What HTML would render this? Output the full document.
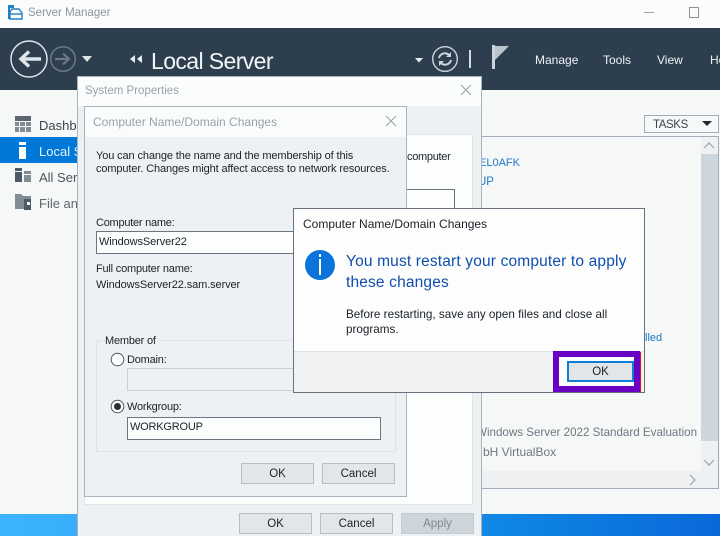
<!DOCTYPE html>
<html><head><meta charset="utf-8"><style>
html,body{margin:0;padding:0;width:720px;height:536px;overflow:hidden;background:#f6f7f7}
*{box-sizing:border-box}
.a{position:absolute}
.t{position:absolute;white-space:nowrap;font-family:"Liberation Sans",sans-serif;font-size:12px;line-height:15px;color:#1a2128}
.b{position:absolute;background:#e2e6e9;border:1px solid #b4bfc9;text-align:center;font-family:"Liberation Sans",sans-serif;font-size:11.5px;color:#1a2128}
.s{font-size:11px;letter-spacing:-.2px}
</style></head><body>
<div id="r" class="a" style="left:0;top:0;width:720px;height:536px;overflow:hidden">
<div class="a" style="left:0;top:0;width:720px;height:28px;background:#fcfcfc"></div>
<svg class="a" style="top:4px;left:7px" width="16" height="16" viewBox="0 0 16 16"><path d="M1 1h6v3H1zM1 4h2v11H1z" fill="#1f80c8"/><path d="M3 8l2-3h7l3 4v6H3z" fill="#fff" stroke="#1f80c8" stroke-width="1.4"/><path d="M3 10h12" stroke="#1f80c8" stroke-width="1.4"/></svg>
<div class="t" style="left:28px;top:6px;font-size:11.5px;color:#8b959e">Server Manager</div>
<div class="a" style="left:644px;top:12px;width:10px;height:1px;background:#9aa4ad"></div>
<div class="a" style="left:689px;top:7px;width:10px;height:11px;border:1px solid #8b959e"></div>

<div class="a" style="left:0;top:28px;width:720px;height:62px;background:#2d3f4e"></div>
<svg class="a" style="left:0;top:28px" width="720" height="62" viewBox="0 28 720 62">
<circle cx="29" cy="59" r="18" fill="none" stroke="#dfe5e8" stroke-width="1.5"/>
<path d="M41 59H22M29 51.500l-8 7.500 8 7.500" fill="none" stroke="#dfe5e8" stroke-width="3.400"/>
<circle cx="63" cy="59" r="12.300" fill="none" stroke="#6c7983" stroke-width="1.500"/>
<path d="M55 59h14M63 53.500l6 5.500-6 5.500" fill="none" stroke="#6c7983" stroke-width="2.200"/>
<path d="M82 56h10l-5 6z" fill="#dde3e7"/>
<path d="M130 59l5-4v8zM137 59l5-4v8z" fill="#e8edf0"/>
<path d="M415 58h8l-4 4.500z" fill="#e8edf0"/>
<circle cx="445" cy="59" r="12.300" fill="none" stroke="#ccd5da" stroke-width="1.400"/>
<path d="M439 58a6 6 0 0 1 10-3M451 60a6 6 0 0 1-10 3" fill="none" stroke="#ccd5da" stroke-width="2"/>
<path d="M451 52v5h-5zM439 66v-5h5z" fill="#ccd5da"/>
<rect x="469" y="50" width="2" height="18" fill="#d5dde1"/>
<rect x="492" y="45" width="3" height="24" fill="#c9d4da"/>
<path d="M495 46h14l-14 14z" fill="#b9c5cc"/>
</svg>
<div class="t" style="left:151px;top:46px;font-size:23px;line-height:30px;color:#f2f5f6;letter-spacing:-.6px">Local Server</div>
<div class="t" style="left:535px;top:53px;color:#eef2f4;font-size:12px">Manage</div>
<div class="t" style="left:603px;top:53px;color:#eef2f4;font-size:12px">Tools</div>
<div class="t" style="left:657px;top:53px;color:#eef2f4;font-size:12px">View</div>
<div class="t" style="left:710px;top:53px;color:#eef2f4;font-size:12px">Help</div>

<div class="a" style="left:0;top:90px;width:720px;height:424px;background:#f6f7f7"></div>
<div class="a" style="left:0;top:137px;width:77px;height:26px;background:#0078d7"></div>
<svg class="a" style="left:0;top:105px" width="77" height="110" viewBox="0 105 77 110">
<path d="M15 116h16v5H15z" fill="#5d6670"/><path d="M15 122h4v4h-4zM20 122h5v4h-5zM26 122h5v4h-5zM15 127h4v5h-4zM20 127h5v5h-5zM26 127h5v5h-5z" fill="#838b94"/>
<rect x="19" y="142" width="7" height="3" fill="#fff"/><rect x="19" y="147" width="7" height="12" fill="#fff"/>
<path d="M15 168h7v3h-7zM15 172h7v10h-7z" fill="#4c5a68"/><path d="M24 171h7v3h-7zM24 175h7v7h-7z" fill="#838b94"/>
<path d="M15 194h6l2 2h8v9h-7v4h-9z" fill="#838b94"/><path d="M24 199h7v11h-7z" fill="#4c5a68"/><path d="M27 202h3v3h-3z" fill="#f6f7f7"/>
</svg>
<div class="t" style="left:39px;top:118px;font-size:13px;color:#3b4650">Dashboard</div>
<div class="t" style="left:39px;top:144px;font-size:13px;color:#e8f3fc">Local Server</div>
<div class="t" style="left:39px;top:170px;font-size:13px;color:#4b5660">All Servers</div>
<div class="t" style="left:39px;top:196px;font-size:13px;color:#5d6770">File and</div>

<div class="a" style="left:644px;top:115px;width:75px;height:18px;border:1px solid #a0acb9;background:#f6f7f7"></div>
<div class="t" style="left:653px;top:118px;color:#3b4650;font-size:11.5px;letter-spacing:-.4px">TASKS</div>
<svg class="a" style="left:702px;top:121px" width="11" height="6"><path d="M0 0h10l-5 5z" fill="#1f2a33"/></svg>

<div class="a" style="left:470px;top:136px;width:249px;height:353px;border:1px solid #a0acb9;background:#f6f7f7"></div>
<div class="a" style="left:701px;top:137px;width:17px;height:351px;background:#eef0f2"></div>
<div class="a" style="left:701px;top:154px;width:17px;height:287px;background:#cdd6dc"></div>
<svg class="a" style="left:703px;top:142px" width="12" height="8"><path d="M1 6l5-5 5 5" fill="none" stroke="#98a4ae" stroke-width="1.200"/></svg>
<svg class="a" style="left:703px;top:459px" width="12" height="8"><path d="M1 1l5 5 5-5" fill="none" stroke="#98a4ae" stroke-width="1.200"/></svg>
<div class="a" style="left:470px;top:471px;width:231px;height:17px;background:#eef0f2"></div>
<svg class="a" style="left:689px;top:474px" width="8" height="12"><path d="M1 1l5 5-5 5" fill="none" stroke="#98a4ae" stroke-width="1.200"/></svg>
<div class="t" style="left:479px;top:156px;color:#1b78c4;font-size:11px">EL0AFK</div>
<div class="t" style="left:478px;top:175px;color:#1b78c4;font-size:11.5px">UP</div>
<div class="t" style="left:645px;top:331px;color:#1b78c4;font-size:11px">lled</div>
<div class="t" style="left:476px;top:425px;color:#6d7882;font-size:11.6px">Windows Server 2022 Standard Evaluation</div>
<div class="t" style="left:483px;top:445px;color:#6d7882;font-size:12px">bH VirtualBox</div>

<div class="a" style="left:0;top:514px;width:720px;height:22px;background:linear-gradient(90deg,#3cb3fd 0%,#2ba2f4 40%,#0f86e4 70%,#0a68da 100%)"></div>

<!-- System Properties -->
<div class="a" style="left:77px;top:76px;width:405px;height:460px;background:#eef1f3;border:1px solid #a8b4c0;border-bottom:0"></div>
<div class="a" style="left:78px;top:77px;width:403px;height:29px;background:#fbfcfc"></div>
<div class="t" style="left:85px;top:84px;color:#98a2ab;font-size:11.5px">System Properties</div>
<svg class="a" style="left:460px;top:84px" width="12" height="12"><path d="M1 1l10 10M11 1L1 11" stroke="#98a2ab" stroke-width="1"/></svg>
<div class="a" style="left:84px;top:134px;width:389px;height:371px;background:#fcfdfd;border:1px solid #dfe5e9"></div>
<div class="t s" style="left:407px;top:150px;letter-spacing:-.3px">computer</div>
<div class="a" style="left:407px;top:189px;width:48px;height:22px;border:1px solid #68727e;border-left:0;background:#fcfdfd"></div>
<div class="b" style="left:239px;top:513px;width:73px;height:21px;line-height:20px">OK</div>
<div class="b" style="left:320px;top:513px;width:73px;height:21px;line-height:20px">Cancel</div>
<div class="b" style="left:401px;top:513px;width:73px;height:21px;line-height:20px;background:#cdd5da;border-color:#c3ccd3;color:#7c8790">Apply</div>

<!-- Inner dialog -->
<div class="a" style="left:84px;top:106px;width:323px;height:391px;background:#eef1f3;border:1px solid #a8b4c0"></div>
<div class="a" style="left:85px;top:107px;width:321px;height:30px;background:#fafbfb"></div>
<div class="t" style="left:93px;top:115px;color:#98a2ab;font-size:12px">Computer Name/Domain Changes</div>
<svg class="a" style="left:385px;top:115px" width="12" height="12"><path d="M1 1l10 10M11 1L1 11" stroke="#98a2ab" stroke-width="1"/></svg>
<div class="t" style="left:96px;top:150px;font-size:11px;line-height:13px;letter-spacing:-.12px">You can change the name and the membership of this<br>computer. Changes might affect access to network resources.</div>
<div class="t s" style="left:96px;top:216px;letter-spacing:-.25px">Computer name:</div>
<div class="a" style="left:96px;top:231px;width:220px;height:23px;background:#fcfdfd;border:1px solid #6c7683"></div>
<div class="t s" style="left:99px;top:235px;letter-spacing:-.1px">WindowsServer22</div>
<div class="t s" style="left:96px;top:262px">Full computer name:</div>
<div class="t s" style="left:96px;top:278px;letter-spacing:-.1px">WindowsServer22.sam.server</div>
<div class="a" style="left:96px;top:340px;width:300px;height:112px;border:1px solid #dde3e7"></div>
<div class="t s" style="left:102px;top:334px;padding:0 3px;background:#eef1f3">Member of</div>
<svg class="a" style="left:110px;top:352px" width="16" height="16"><circle cx="7.500" cy="7.500" r="6.300" fill="#fcfdfd" stroke="#4d5761"/></svg>
<div class="t s" style="left:127px;top:353px">Domain:</div>
<div class="a" style="left:127px;top:368px;width:254px;height:23px;background:#eef1f3;border:1px solid #c5d0d8"></div>
<svg class="a" style="left:110px;top:399px" width="16" height="16"><circle cx="7.500" cy="7.500" r="6.300" fill="#fcfdfd" stroke="#4d5761"/><circle cx="7.500" cy="7.500" r="3.500" fill="#26303a"/></svg>
<div class="t s" style="left:127px;top:400px">Workgroup:</div>
<div class="a" style="left:127px;top:417px;width:254px;height:23px;background:#fcfdfd;border:1px solid #6c7683"></div>
<div class="t s" style="left:130px;top:420px">WORKGROUP</div>
<div class="b" style="left:241px;top:463px;width:73px;height:21px;line-height:20px">OK</div>
<div class="b" style="left:322px;top:463px;width:73px;height:21px;line-height:20px">Cancel</div>

<!-- Message -->
<div class="a" style="left:293px;top:208px;width:352px;height:185px;background:#fdfdfd;border:1px solid #68727e"></div>
<div class="a" style="left:294px;top:351px;width:350px;height:41px;background:#f0f2f3;border-top:1px solid #dde2e6"></div>
<div class="t" style="left:303px;top:217px;font-size:12px;color:#1a2128">Computer Name/Domain Changes</div>
<div class="a" style="left:305px;top:250px;width:30px;height:30px;border-radius:50%;background:#0a74da"></div>
<div class="a" style="left:319px;top:254px;width:2px;height:3px;background:#fff"></div>
<div class="a" style="left:319px;top:259px;width:2px;height:16px;background:#fff"></div>
<div class="t" style="left:346px;top:251px;font-size:15.5px;line-height:21px;color:#0e4fad;letter-spacing:.16px">You must restart your computer to apply<br>these changes</div>
<div class="t" style="left:346px;top:307px;font-size:11.7px;line-height:15px;color:#1a2128">Before restarting, save any open files and close all<br>programs.</div>
<div class="a" style="left:553px;top:351px;width:87px;height:41px;background:#fff;border:6px solid #6a00c4"></div>
<div class="a" style="left:640px;top:352px;width:1px;height:40px;background:#d8141c"></div>
<div class="b" style="left:567px;top:361px;width:67px;height:21px;line-height:18px;border:2px solid #0f7ed6">OK</div>
</div>
</body></html>
